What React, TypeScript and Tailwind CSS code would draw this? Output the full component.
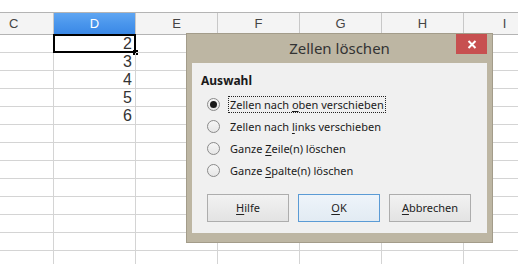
import React from 'react';

const cols = [
  { key: 'C', w: 'w-[54px]', head: 'pl-[9px] text-left' },
  { key: 'D', w: 'w-[82px]', head: 'text-center' },
  { key: 'E', w: 'w-[82px]', head: 'text-center' },
  { key: 'F', w: 'w-[82px]', head: 'text-center' },
  { key: 'G', w: 'w-[82px]', head: 'text-center' },
  { key: 'H', w: 'w-[82px]', head: 'text-center' },
  { key: 'I', w: 'w-[82px]', head: 'text-center' },
];

const values = ['2', '3', '4', '5', '6'];
const rows = Array.from({ length: 13 }, (_, i) => i);

function Radio({ checked }: { checked?: boolean }) {
  return (
    <span className="flex items-center justify-center w-[13px] h-[13px] rounded-full border border-[#8a8a8a] bg-gradient-to-b from-[#f6f6f6] to-[#e6e6e6]">
      {checked && <span className="w-[7px] h-[7px] rounded-full bg-[#1a1a1a]" />}
    </span>
  );
}

function Option({ pre, u, post, checked }: { pre: string; u: string; post: string; checked?: boolean }) {
  return (
    <div className="flex items-center h-[22px] pl-[6px]">
      <Radio checked={checked} />
      <span className={`ml-[9px] px-[1px] leading-[15px] ${checked ? 'outline outline-1 outline-dotted outline-[#222]' : ''}`}>
        {pre}<span className="underline underline-offset-2">{u}</span>{post}
      </span>
    </div>
  );
}

function Btn({ u, rest, primary }: { u: string; rest: string; primary?: boolean }) {
  return (
    <button className={`w-[82px] h-[28px] border text-[11px] ${primary ? 'border-[#5b9bd5] bg-gradient-to-b from-[#eef4fa] to-[#e2ebf3]' : 'border-[#adadad] bg-gradient-to-b from-[#f2f2f2] to-[#e3e3e3]'} text-[#222]`}>
      <span className="underline underline-offset-2">{u}</span>{rest}
    </button>
  );
}

export default function App() {
  return (
    <div className="relative w-[518px] h-[264px] overflow-hidden bg-white" style={{ fontFamily: '"Liberation Sans", Arial, sans-serif' }}>
      <div className="h-[12px] overflow-hidden">
        <span className="block -mt-[16px] leading-[20px] text-[15px] text-[#444]">c</span>
      </div>
      <div className="flex h-[23px] border-t border-b border-[#b4b4b4] bg-[#f4f4f4]">
        {cols.map((c) => (
          <div key={c.key}
            className={`${c.w} shrink-0 border-r border-[#c8c8c8] text-[13px] leading-[21px] ${c.head} ${c.key === 'D' ? 'bg-gradient-to-b from-[#5fa6f2] via-[#4a96ec] to-[#3a88e6] text-white' : 'text-[#444]'}`}>
            {c.key}
          </div>
        ))}
      </div>
      {rows.map((r) => (
        <div key={r} className="flex h-[18px]">
          {cols.map((c) => {
            const active = c.key === 'D' && r === 0;
            return (
              <div key={c.key}
                className={`${c.w} shrink-0 relative border-r border-b border-[#d4d4d4] text-right text-[16px] leading-[17px] pr-[3px] text-[#333]`}>
                {c.key === 'D' && values[r]}
                {active && (
                  <>
                    <span className="absolute -left-[1px] -top-[1px] w-[83px] h-[19px] border-2 border-black" />
                    <span className="absolute -right-[3px] -bottom-[3px] w-[5px] h-[5px] bg-black" />
                  </>
                )}
              </div>
            );
          })}
        </div>
      ))}

      <div className="absolute left-[186px] top-[33px] w-[307px] h-[210px] flex flex-col bg-[#bdb6a3] border border-[#a39c8a] px-[5px] pb-[9px]"
        style={{ fontFamily: '"Noto Sans", "Segoe UI", sans-serif' }}>
        <div className="relative h-[29px] flex items-center justify-center text-[15px] text-[#333]">
          Zellen löschen
          <div className="absolute right-[0px] top-0 w-[31px] h-[20px] bg-[#c75050] flex items-center justify-center">
            <svg width="10" height="9" viewBox="0 0 10 9">
              <path d="M1.5 1 L8.5 8 M8.5 1 L1.5 8" stroke="white" strokeWidth="2" />
            </svg>
          </div>
        </div>
        <div className="flex-1 bg-[#f0f0f0] text-[11px] text-[#1a1a1a] pt-[9px] pl-[9px]">
          <div className="font-bold leading-[17px] text-[12px]">Auswahl</div>
          <div className="mt-[4px]">
            <Option pre="Zellen nach " u="o" post="ben verschieben" checked />
            <Option pre="Zellen nach " u="l" post="inks verschieben" />
            <Option pre="Ganze " u="Z" post="eile(n) löschen" />
            <Option pre="Ganze " u="S" post="palte(n) löschen" />
          </div>
          <div className="flex gap-[9px] mt-[13px] pl-[6px]">
            <Btn u="H" rest="ilfe" />
            <Btn u="O" rest="K" primary />
            <Btn u="A" rest="bbrechen" />
          </div>
        </div>
      </div>
    </div>
  );
}
